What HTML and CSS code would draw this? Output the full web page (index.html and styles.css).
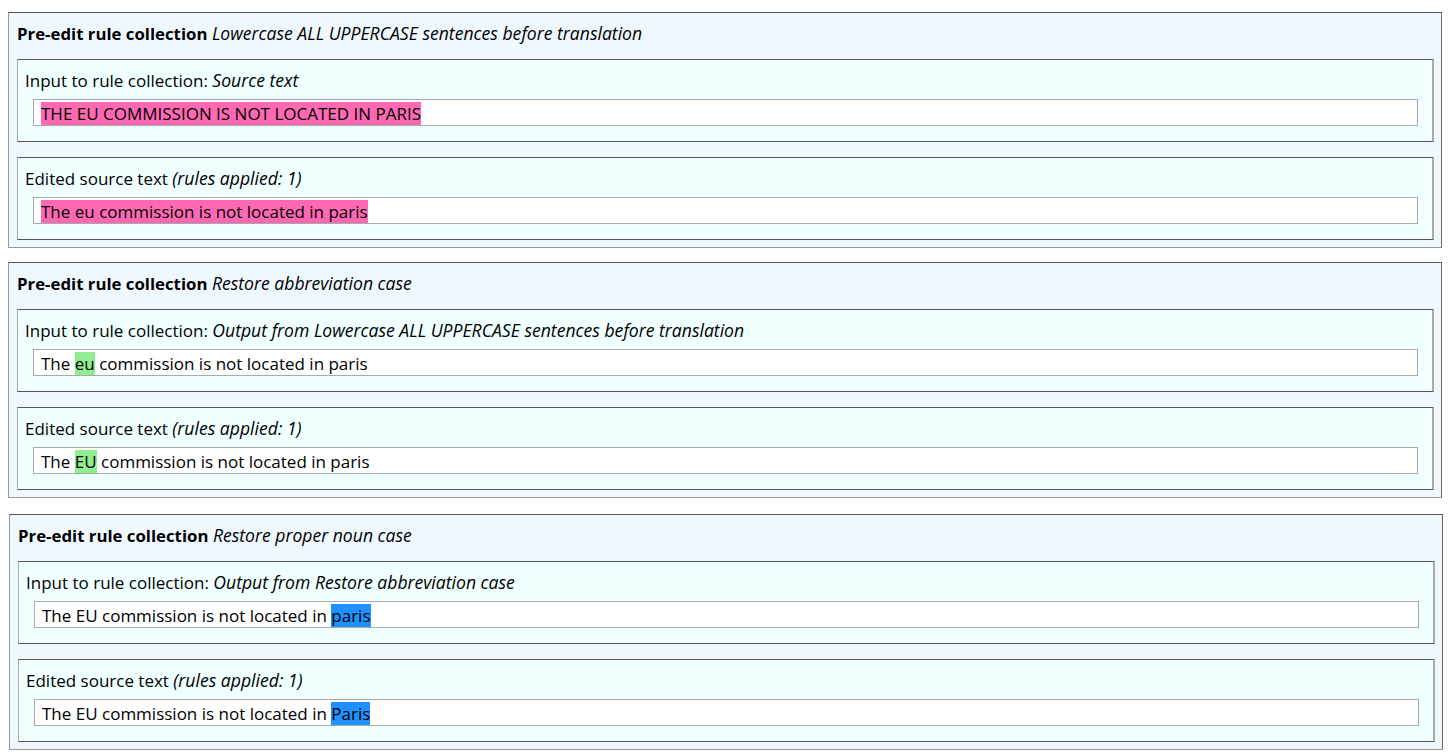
FILE: index.html
```html
<!DOCTYPE html>
<html>
<head>
<meta charset="utf-8">
<link rel="stylesheet" href="styles.css">
</head>
<body>
<div class="page">
  <section class="collection">
    <div class="title"><b>Pre-edit rule collection</b> <i>Lowercase ALL UPPERCASE sentences before translation</i></div>
    <div class="step">
      <div class="label">Input to rule collection: <i>Source text</i></div>
      <div class="field"><span class="hl pink">THE EU COMMISSION IS NOT LOCATED IN PARIS</span></div>
    </div>
    <div class="step">
      <div class="label">Edited source text <i>(rules applied: 1)</i></div>
      <div class="field"><span class="hl pink">The eu commission is not located in paris</span></div>
    </div>
  </section>
  <section class="collection">
    <div class="title"><b>Pre-edit rule collection</b> <i>Restore abbreviation case</i></div>
    <div class="step">
      <div class="label">Input to rule collection: <i>Output from Lowercase ALL UPPERCASE sentences before translation</i></div>
      <div class="field">The <span class="hl green">eu</span> commission is not located in paris</div>
    </div>
    <div class="step">
      <div class="label">Edited source text <i>(rules applied: 1)</i></div>
      <div class="field">The <span class="hl green">EU</span> commission is not located in paris</div>
    </div>
  </section>
  <section class="collection shifted">
    <div class="title"><b>Pre-edit rule collection</b> <i>Restore proper noun case</i></div>
    <div class="step">
      <div class="label">Input to rule collection: <i>Output from Restore abbreviation case</i></div>
      <div class="field">The EU commission is not located in <span class="hl blue">paris</span></div>
    </div>
    <div class="step">
      <div class="label">Edited source text <i>(rules applied: 1)</i></div>
      <div class="field">The EU commission is not located in <span class="hl blue">Paris</span></div>
    </div>
  </section>
</div>
</body>
</html>
```
FILE: styles.css
```css
* { box-sizing: border-box; }
html, body { background: #ffffff; }
body {
  margin: 8px;
  font-family: "Open Sans", "Noto Sans", sans-serif;
  font-size: 17px;
  color: #000;
}
i { font-size: 17.6px; }
.page {
  padding-top: 4px;
  display: flex;
  flex-direction: column;
  gap: 14px;
}
.collection {
  width: 1434px;
  background: #f0f8ff;
  border: 1px solid;
  border-color: #555 #666 #999 #999;
  padding: 8px 7px 7px 8px;
  display: flex;
  flex-direction: column;
}
.collection.shifted {
  margin-top: 2px;
  margin-left: 1px;
}
.title {
  height: 24px;
  line-height: 24px;
  margin-bottom: 14px;
  white-space: nowrap;
}
.title b { font-weight: 700; font-size: 16.8px; }
.title i { font-weight: 400; }
.step {
  background: #f0ffff;
  border: 1px solid;
  border-color: #555 #aaa #555 #aaa;
  border-width: 1px 2px 1px 1px;
  padding: 8px 7px 15px 7px;
}
.step + .step { margin-top: 15px; }
.label {
  height: 24px;
  line-height: 24px;
  white-space: nowrap;
}
.field {
  margin: 7px 7px 0 8px;
  height: 27px;
  background: #fff;
  border: 1px solid #a9a9a9;
  padding: 1px 7px 0 7px;
  line-height: 25px;
  white-space: nowrap;
}
.hl { display: inline-block; height: 23px; vertical-align: top; line-height: 24px; margin-top: 1px; }
.pink { background: #ff69b4; }
.green { background: #90ee90; }
.blue { background: #1e90ff; }
```
